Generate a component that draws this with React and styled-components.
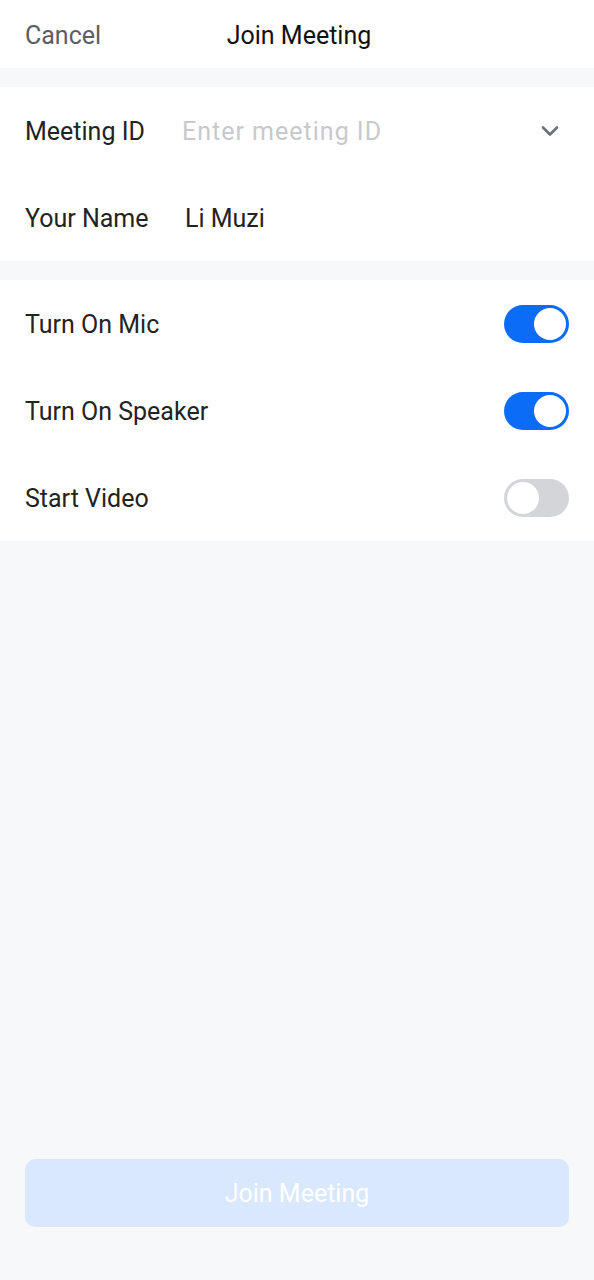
import React, { useState } from 'react'
import styled, { createGlobalStyle } from 'styled-components';

const GlobalStyle = createGlobalStyle`
	* { box-sizing: border-box; }
	body {
		margin: 0;
		background: #f7f8fa;
		font-family: Roboto, "Liberation Sans", sans-serif;
	}
`

const Page = styled.div`
	width: 594px;
	height: 1280px;
	display: flex;
	flex-direction: column;
	background: #f7f8fa;
`

const Header = styled.header`
	height: 68px;
	background: #fff;
	display: grid;
	grid-template-columns: 1fr auto 1fr;
	align-items: center;
	padding: 3px 25px 0;
	margin-bottom: 19px;
`

const CancelLink = styled.span`
	font-size: 25px;
	color: #5b5e66;
`

const Title = styled.h1`
	margin: 0 0 0 4px;
	font-size: 25px;
	font-weight: 400;
	color: #111;
`

const Section = styled.section`
	background: #fff;
	margin-bottom: 19px;
`

const Row = styled.div`
	height: 87px;
	display: flex;
	align-items: center;
	padding: 1px 25px 0;
`

const Label = styled.span`
	font-size: 25px;
	color: #232323;
	width: ${props => props.width || 'auto'};
	flex-shrink: 0;
	flex: ${props => props.grow ? 1 : 'none'};
`

const Input = styled.input`
	flex: 1;
	min-width: 0;
	border: none;
	outline: none;
	background: transparent;
	font-family: inherit;
	font-size: 25px;
	letter-spacing: 1px;
	color: #232323;
	padding: 0;
	&::placeholder {
		color: #c8c9cc;
	}
`

const Value = styled.span`
	flex: 1;
	font-size: 25px;
	color: #232323;
`

const Chevron = styled.svg`
	width: 18px;
	height: 12px;
	margin-right: 10px;
`

const SwitchTrack = styled.button`
	width: 65px;
	height: 38px;
	border-radius: 19px;
	border: none;
	padding: 3px;
	display: flex;
	justify-content: ${props => props.on ? 'flex-end' : 'flex-start'};
	background: ${props => props.on ? '#0b6cf8' : '#d3d5d9'};
	cursor: pointer;
`

const SwitchKnob = styled.span`
	width: 32px;
	height: 32px;
	border-radius: 50%;
	background: #fff;
`

const Spacer = styled.div`
	flex: 1;
`

const JoinButton = styled.button`
	margin: 0 25px 53px;
	height: 68px;
	border: none;
	border-radius: 10px;
	background: #d9e8fd;
	color: #fff;
	font-family: inherit;
	font-size: 25px;
	padding-top: 2px;
`

const Toggle = ({ on, onToggle }) => (
	<SwitchTrack on={on ? 1 : 0} onClick={onToggle}>
		<SwitchKnob />
	</SwitchTrack>
)

const App = () => {
	const [settings, setSettings] = useState({ mic: true, speaker: true, video: false });
	const flip = key => setSettings(s => ({ ...s, [key]: !s[key] }));

	return (
		<Page>
			<GlobalStyle />
			<Header>
				<CancelLink>Cancel</CancelLink>
				<Title>Join Meeting</Title>
				<span />
			</Header>
			<Section>
				<Row>
					<Label width="157px">Meeting ID</Label>
					<Input placeholder="Enter meeting ID" />
					<Chevron viewBox="0 0 18 12" fill="none">
						<path d="M2 2.5l7 7 7-7" stroke="#6d7078" strokeWidth="2.6" strokeLinecap="round" strokeLinejoin="round" />
					</Chevron>
				</Row>
				<Row>
					<Label width="160px">Your Name</Label>
					<Value>Li Muzi</Value>
				</Row>
			</Section>
			<Section>
				<Row>
					<Label grow>Turn On Mic</Label>
					<Toggle on={settings.mic} onToggle={() => flip('mic')} />
				</Row>
				<Row>
					<Label grow>Turn On Speaker</Label>
					<Toggle on={settings.speaker} onToggle={() => flip('speaker')} />
				</Row>
				<Row>
					<Label grow>Start Video</Label>
					<Toggle on={settings.video} onToggle={() => flip('video')} />
				</Row>
			</Section>
			<Spacer />
			<JoinButton disabled>Join Meeting</JoinButton>
		</Page>
	)
}

export default App
